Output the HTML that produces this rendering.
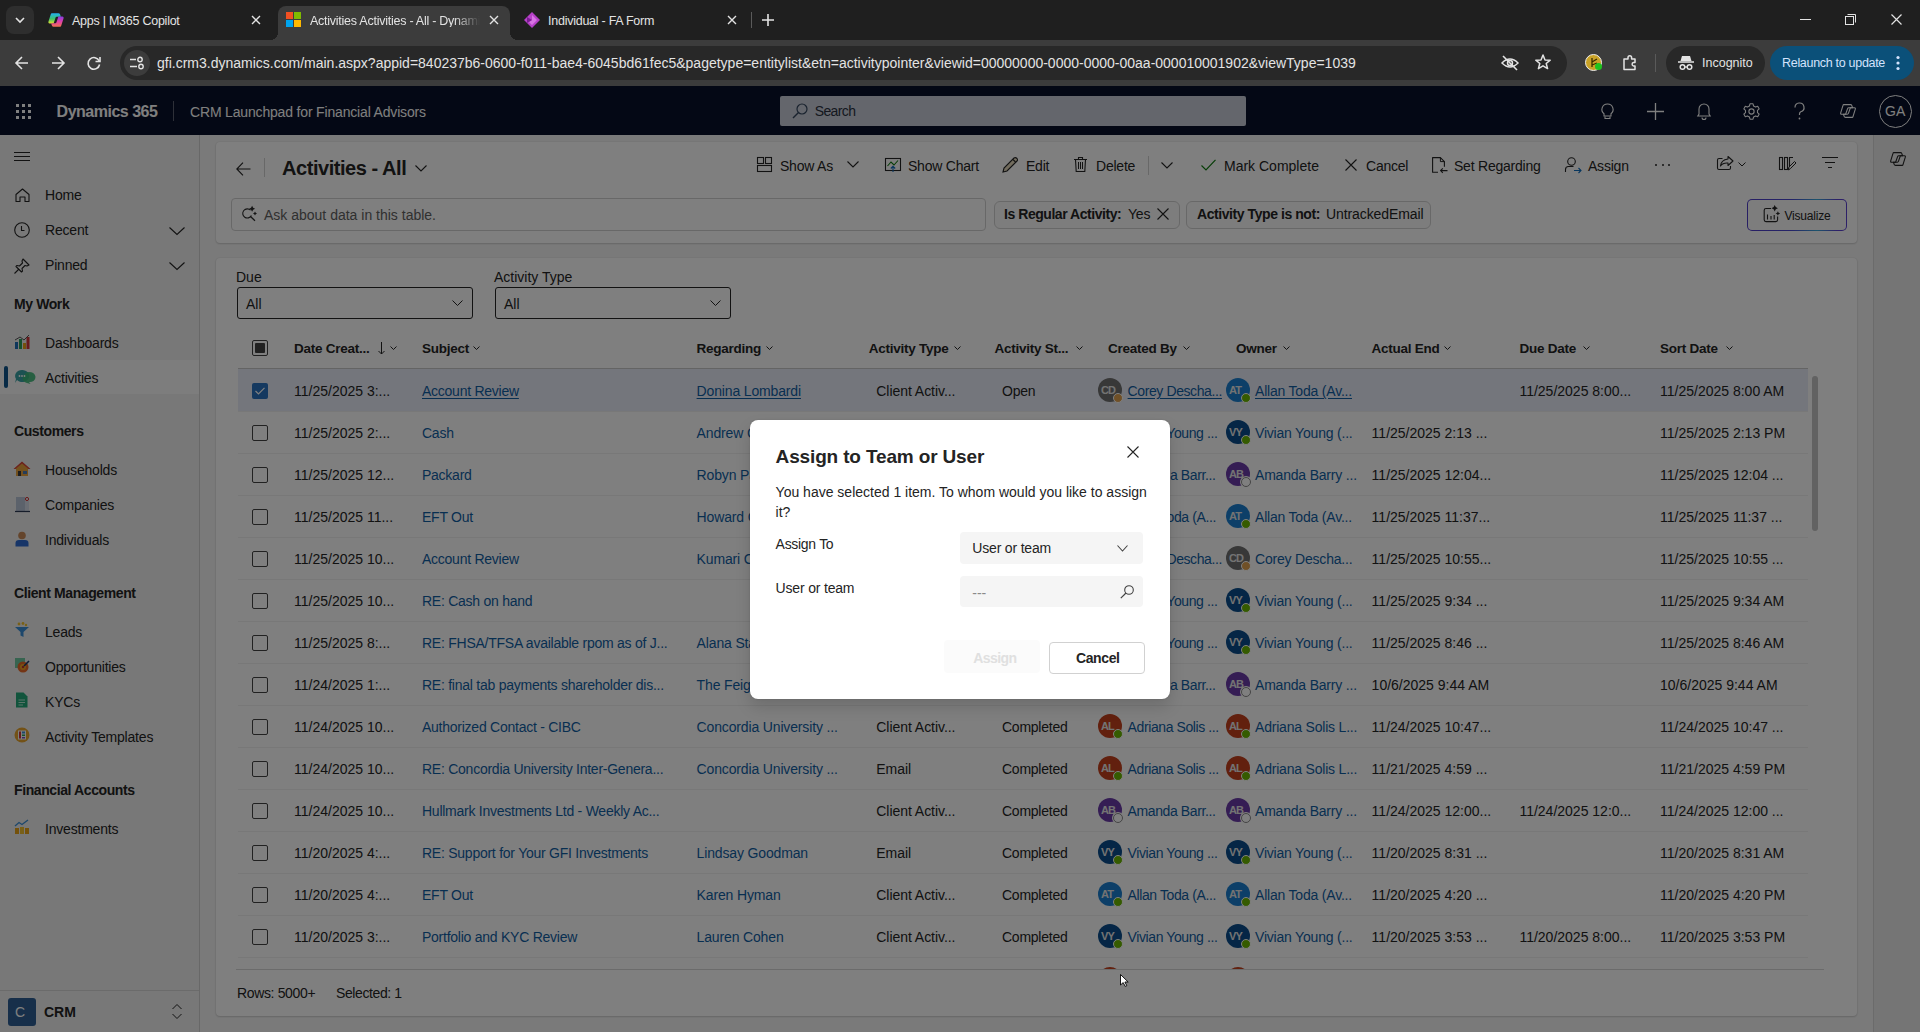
<!DOCTYPE html>
<html><head><meta charset="utf-8">
<style>
*{box-sizing:border-box}
html,body{margin:0;padding:0}
body{width:1920px;height:1032px;overflow:hidden;position:relative;font-family:"Liberation Sans",sans-serif;background:#f5f5f5;color:#242424}
.a{position:absolute}
.t{position:absolute;white-space:nowrap;line-height:1}
svg{position:absolute;overflow:visible}
.card{position:absolute;background:#fff;border-radius:4px;box-shadow:0 0 2px rgba(0,0,0,.12),0 1px 2px rgba(0,0,0,.14)}
.u{text-decoration:underline;text-underline-offset:2px}
</style></head><body>

<div class="a" style="left:0px;top:0px;width:1920px;height:40px;background:#1f1f1f;"></div>
<div class="a" style="left:0px;top:40px;width:1920px;height:46px;background:#3c3c3c;"></div>
<!-- tab strip -->
<div class="a" style="left:6px;top:6px;width:28px;height:28px;border-radius:8px;background:#2e2e2e"></div>
<svg style="left:14px;top:15px" width="12" height="10"><path d="M2 3 L6 7 L10 3" stroke="#e3e3e3" stroke-width="1.6" fill="none"/></svg>
<!-- tab1 -->
<svg style="left:48px;top:13px" width="16" height="14" viewBox="0 0 16 14"><defs><linearGradient id="cgl" x1="0" y1="0" x2="0" y2="1"><stop offset="0" stop-color="#22b0f0"/><stop offset=".55" stop-color="#3cc46a"/><stop offset="1" stop-color="#e0e030"/></linearGradient><linearGradient id="cgr" x1="0" y1="0" x2="0" y2="1"><stop offset="0" stop-color="#8a3ce0"/><stop offset=".5" stop-color="#e040a8"/><stop offset="1" stop-color="#f07050"/></linearGradient></defs><path d="M3.8 0.3 H10.6 Q11.6 0.3 12 1.3 L12.9 3.8 H8.6 Q7.9 3.8 7.6 4.6 L5.6 10.4 H1.6 Q0 10.4 0.4 8.8 L2.8 1.3 Q3.1 0.3 3.8 0.3 Z" fill="url(#cgl)"/><path d="M12.2 13.7 H5.4 Q4.4 13.7 4 12.7 L3.1 10.2 H7.4 Q8.1 10.2 8.4 9.4 L10.4 3.6 H14.4 Q16 3.6 15.6 5.2 L13.2 12.7 Q12.9 13.7 12.2 13.7 Z" fill="url(#cgr)"/></svg>
<div class="t" style="left:72px;top:14.8px;font-size:12.5px;letter-spacing:-0.25px;color:#e3e3e3">Apps | M365 Copilot</div>
<svg style="left:251px;top:15px" width="10" height="10"><path d="M1 1 L9 9 M9 1 L1 9" stroke="#e3e3e3" stroke-width="1.4"/></svg>
<!-- active tab -->
<div class="a" style="left:278px;top:6px;width:232px;height:34px;background:#3c3c3c;border-radius:8px 8px 0 0"></div>
<div class="a" style="left:270px;top:32px;width:8px;height:8px;background:radial-gradient(circle at 0 0,#1f1f1f 8px,#3c3c3c 8px)"></div>
<div class="a" style="left:510px;top:32px;width:8px;height:8px;background:radial-gradient(circle at 100% 0,#1f1f1f 8px,#3c3c3c 8px)"></div>
<div class="a" style="left:286px;top:12px;width:7px;height:7px;background:#f25022"></div>
<div class="a" style="left:294px;top:12px;width:7px;height:7px;background:#7fba00"></div>
<div class="a" style="left:286px;top:20px;width:7px;height:7px;background:#00a4ef"></div>
<div class="a" style="left:294px;top:20px;width:7px;height:7px;background:#ffb900"></div>
<div class="t" style="left:310px;top:14.8px;font-size:12.5px;letter-spacing:-0.25px;color:#e3e3e3;width:170px;overflow:hidden;-webkit-mask-image:linear-gradient(90deg,#000 85%,transparent)">Activities Activities - All - Dynamics 365</div>
<svg style="left:489px;top:15px" width="10" height="10"><path d="M1 1 L9 9 M9 1 L1 9" stroke="#e3e3e3" stroke-width="1.4"/></svg>
<!-- tab3 -->
<svg style="left:524px;top:12px" width="16" height="16"><path d="M8 0 L16 8 L8 16 L0 8 Z" fill="#b640c8"/><path d="M8 3 L13 8 L8 13 L5 10 L8 8 Z" fill="#e58af0" opacity=".7"/><path d="M3 5 L8 8 L3 11 Z" fill="#7a1d92"/></svg>
<div class="t" style="left:548px;top:14.8px;font-size:12.5px;letter-spacing:-0.25px;color:#e3e3e3">Individual - FA Form</div>
<svg style="left:727px;top:15px" width="10" height="10"><path d="M1 1 L9 9 M9 1 L1 9" stroke="#e3e3e3" stroke-width="1.4"/></svg>
<div class="a" style="left:751px;top:12px;width:1px;height:16px;background:#5a5a5a"></div>
<svg style="left:762px;top:14px" width="12" height="12"><path d="M6 0 V12 M0 6 H12" stroke="#e3e3e3" stroke-width="1.6"/></svg>
<!-- window controls -->
<div class="a" style="left:1800px;top:19px;width:11px;height:1px;background:#e3e3e3"></div>
<svg style="left:1845px;top:14px" width="11" height="11"><rect x="0.5" y="2.5" width="8" height="8" stroke="#e3e3e3" fill="none"/><path d="M2.5 0.5 H10.5 V8.5" stroke="#e3e3e3" fill="none"/></svg>
<svg style="left:1891px;top:14px" width="11" height="11"><path d="M0.5 0.5 L10.5 10.5 M10.5 0.5 L0.5 10.5" stroke="#e3e3e3" stroke-width="1.2"/></svg>
<!-- toolbar -->
<svg style="left:15px;top:56px" width="14" height="14"><path d="M13 7 H1 M7 1 L1 7 L7 13" stroke="#e3e3e3" stroke-width="1.6" fill="none"/></svg>
<svg style="left:51px;top:56px" width="14" height="14"><path d="M1 7 H13 M7 1 L13 7 L7 13" stroke="#e3e3e3" stroke-width="1.6" fill="none"/></svg>
<svg style="left:87px;top:56px" width="14" height="14"><path d="M12.2 5 A5.8 5.8 0 1 0 12.6 8.5" stroke="#e3e3e3" stroke-width="1.6" fill="none"/><path d="M13 1 V5.5 H8.5" stroke="#e3e3e3" stroke-width="1.6" fill="none"/></svg>
<div class="a" style="left:120px;top:46px;width:1447px;height:34px;border-radius:17px;background:#282828"></div>
<div class="a" style="left:124px;top:50px;width:26px;height:26px;border-radius:13px;background:#3c3c3c"></div>
<svg style="left:130px;top:56px" width="14" height="14"><path d="M0 3.5 H6 M0 10.5 H7" stroke="#e3e3e3" stroke-width="1.5"/><circle cx="10" cy="3.5" r="2.2" stroke="#e3e3e3" stroke-width="1.4" fill="none"/><circle cx="11" cy="10.5" r="2.2" stroke="#e3e3e3" stroke-width="1.4" fill="none"/></svg>
<div class="t" style="left:157px;top:56px;font-size:14px;color:#e3e3e3">gfi.crm3.dynamics.com/main.aspx?appid=840237b6-0600-f011-bae4-6045bd61fec5&amp;pagetype=entitylist&amp;etn=activitypointer&amp;viewid=00000000-0000-0000-00aa-000010001902&amp;viewType=1039</div>
<svg style="left:1501px;top:55px" width="18" height="16"><path d="M1 8 Q9 0 17 8 Q9 16 1 8 Z" stroke="#e3e3e3" stroke-width="1.5" fill="none"/><circle cx="9" cy="8" r="2.5" stroke="#e3e3e3" stroke-width="1.5" fill="none"/><path d="M2 1 L16 15" stroke="#e3e3e3" stroke-width="1.6"/></svg>
<svg style="left:1535px;top:54px" width="16" height="16"><path d="M8 1 L10 6 L15.2 6.2 L11.2 9.5 L12.6 14.6 L8 11.8 L3.4 14.6 L4.8 9.5 L0.8 6.2 L6 6 Z" stroke="#e3e3e3" stroke-width="1.5" fill="none" stroke-linejoin="round"/></svg>
<div class="a" style="left:1585px;top:54px;width:17px;height:17px;border-radius:50%;background:#c9a227;border:1px solid #eee"></div>
<svg style="left:1588px;top:57px" width="12" height="12"><path d="M4 1 V10 M4 5 L9 2 M4 8 L9 6" stroke="#3a2a00" stroke-width="1.3" fill="none"/></svg>
<div class="a" style="left:1595px;top:63px;width:7px;height:7px;border-radius:50%;background:#1ec31e"></div>
<svg style="left:1622px;top:55px" width="16" height="16"><path d="M2 4 H6 V2.5 A1.8 1.8 0 0 1 9.6 2.5 V4 H13 V7.5 H11.5 A1.8 1.8 0 0 0 11.5 11 H13 V14.5 H2 Z" stroke="#e3e3e3" stroke-width="1.5" fill="none" stroke-linejoin="round"/></svg>
<div class="a" style="left:1655px;top:54px;width:1px;height:18px;background:#5a5a5a"></div>
<div class="a" style="left:1666px;top:46px;width:99px;height:34px;border-radius:17px;background:#282828"></div>
<svg style="left:1678px;top:55px" width="16" height="16"><path d="M4 1 H12 L13.5 6 H2.5 Z" fill="#e3e3e3"/><path d="M0 7 H16" stroke="#e3e3e3" stroke-width="1.5"/><circle cx="4.5" cy="12" r="2.3" stroke="#e3e3e3" stroke-width="1.5" fill="none"/><circle cx="11.5" cy="12" r="2.3" stroke="#e3e3e3" stroke-width="1.5" fill="none"/><path d="M6.8 12 H9.2" stroke="#e3e3e3" stroke-width="1.3"/></svg>
<div class="t" style="left:1702px;top:56.5px;font-size:12.5px;color:#e3e3e3">Incognito</div>
<div class="a" style="left:1770px;top:46px;width:144px;height:34px;border-radius:17px;background:#0b5079"></div>
<div class="t" style="left:1782px;top:56.5px;font-size:12.5px;letter-spacing:-0.3px;color:#d3e3fd">Relaunch to update</div>
<svg style="left:1896px;top:55px" width="4" height="16"><circle cx="2" cy="2.5" r="1.6" fill="#d3e3fd"/><circle cx="2" cy="8" r="1.6" fill="#d3e3fd"/><circle cx="2" cy="13.5" r="1.6" fill="#d3e3fd"/></svg>

<div class="a" style="left:0px;top:86px;width:1920px;height:49px;background:#09112a;"></div>
<div class="a" style="left:16px;top:104px;width:3px;height:3px;background:#ffffff;"></div>
<div class="a" style="left:16px;top:110px;width:3px;height:3px;background:#ffffff;"></div>
<div class="a" style="left:16px;top:116px;width:3px;height:3px;background:#ffffff;"></div>
<div class="a" style="left:22px;top:104px;width:3px;height:3px;background:#ffffff;"></div>
<div class="a" style="left:22px;top:110px;width:3px;height:3px;background:#ffffff;"></div>
<div class="a" style="left:22px;top:116px;width:3px;height:3px;background:#ffffff;"></div>
<div class="a" style="left:28px;top:104px;width:3px;height:3px;background:#ffffff;"></div>
<div class="a" style="left:28px;top:110px;width:3px;height:3px;background:#ffffff;"></div>
<div class="a" style="left:28px;top:116px;width:3px;height:3px;background:#ffffff;"></div>
<div class="t " style="left:56.6px;top:104.46px;font-size:16px;color:#fff;font-weight:bold;letter-spacing:-0.5px">Dynamics 365</div>
<div class="a" style="left:173px;top:101px;width:1px;height:20px;background:#5c6070;"></div>
<div class="t " style="left:190px;top:105.15px;font-size:14px;color:#fff;font-weight:normal;letter-spacing:-0.17px">CRM Launchpad for Financial Advisors</div>
<div class="a" style="left:780px;top:96px;width:466px;height:30px;background:#c8ccd8;border-radius:2px"></div>
<svg style="left:792px;top:103px;" width="16" height="16" viewBox="0 0 16 16"><circle cx="10" cy="6" r="5" stroke="#34465e" stroke-width="1.2" fill="none"/><path d="M6.5 9.5 L1 15" stroke="#34465e" stroke-width="1.4"/></svg>
<div class="t " style="left:814.7px;top:104.15px;font-size:14px;color:#2a3140;font-weight:normal;letter-spacing:-0.6px">Search</div>
<svg style="left:1601px;top:103px;" width="13" height="17" viewBox="0 0 13 17"><path d="M6.5 1 A5.5 5.5 0 0 0 3 10.8 V13 H10 V10.8 A5.5 5.5 0 0 0 6.5 1 Z" stroke="#ffffff" stroke-width="1.1" fill="none"/><path d="M4 13.5 V15.5 H9 V13.5" stroke="#ffffff" stroke-width="1.1" fill="none"/></svg>
<svg style="left:1647px;top:103px;" width="17" height="17" viewBox="0 0 17 17"><path d="M8.5 0 V17 M0 8.5 H17" stroke="#ffffff" stroke-width="1.3"/></svg>
<svg style="left:1697px;top:103px;" width="14" height="17" viewBox="0 0 14 17"><path d="M7 1 A5 5 0 0 0 2 6 V11 L0.8 13 H13.2 L12 11 V6 A5 5 0 0 0 7 1 Z" stroke="#ffffff" stroke-width="1.1" fill="none"/><path d="M5 14.5 A2 2 0 0 0 9 14.5" stroke="#ffffff" stroke-width="1.1" fill="none"/></svg>
<svg style="left:1743px;top:103px;" width="17" height="17" viewBox="0 0 17 17"><circle cx="8.5" cy="8.5" r="2.6" stroke="#ffffff" stroke-width="1.1" fill="none"/><path d="M7 0.8 H10 L10.6 3 L12.6 4.1 L14.7 3.3 L16.2 5.9 L14.5 7.4 V9.6 L16.2 11.1 L14.7 13.7 L12.6 12.9 L10.6 14 L10 16.2 H7 L6.4 14 L4.4 12.9 L2.3 13.7 L0.8 11.1 L2.5 9.6 V7.4 L0.8 5.9 L2.3 3.3 L4.4 4.1 L6.4 3 Z" stroke="#ffffff" stroke-width="1.1" fill="none" stroke-linejoin="round"/></svg>
<svg style="left:1794px;top:103px;" width="11" height="17" viewBox="0 0 11 17"><path d="M1 4.5 A4.5 4.5 0 1 1 6.8 8.8 Q5.5 9.4 5.5 11 V12" stroke="#ffffff" stroke-width="1.2" fill="none"/><circle cx="5.5" cy="15.5" r="0.9" fill="#ffffff"/></svg>
<svg style="left:1840px;top:104px;" width="16" height="14" viewBox="0 0 16 14"><path d="M3.8 0.6 H10.6 Q11.4 0.6 11.7 1.4 L12.6 3.8 H8.6 Q7.9 3.8 7.6 4.6 L5.6 10.2 H1.6 Q0.3 10.2 0.7 8.8 L3 1.4 Q3.2 0.6 3.8 0.6 Z" stroke="#ffffff" stroke-width="1.1" fill="none" stroke-linejoin="round"/><path d="M12.2 13.4 H5.4 Q4.6 13.4 4.3 12.6 L3.4 10.2 H7.4 Q8.1 10.2 8.4 9.4 L10.4 3.8 H14.4 Q15.7 3.8 15.3 5.2 L13 12.6 Q12.8 13.4 12.2 13.4 Z" stroke="#ffffff" stroke-width="1.1" fill="none" stroke-linejoin="round"/></svg>
<div class="a" style="left:1879px;top:95px;width:33px;height:33px;border-radius:50%;border:1px solid #fff"></div>
<div class="t " style="left:1885px;top:104.15px;font-size:14px;color:#fff;font-weight:normal;">GA</div>
<div class="a" style="left:0px;top:135px;width:200px;height:897px;background:#f0f0f0;border-right:1px solid #d1d1d1"></div>
<div class="a" style="left:0px;top:990px;width:199px;height:1px;background:#d6d6d6;"></div>
<svg style="left:14px;top:152px;" width="16" height="10" viewBox="0 0 16 10"><path d="M0 0.5 H16 M0 4.5 H16 M0 8.5 H16" stroke="#242424" stroke-width="1"/></svg>
<svg style="left:15px;top:188px;" width="15" height="14" viewBox="0 0 15 14"><path d="M1 6.5 L7.5 1 L14 6.5 V13.5 H10 V9 H5 V13.5 H1 Z" stroke="#242424" stroke-width="1.1" fill="none" stroke-linejoin="round"/></svg>
<div class="t " style="left:45px;top:188.15px;font-size:14px;color:#242424;font-weight:normal;letter-spacing:-0.2px">Home</div>
<svg style="left:14px;top:222px;" width="16" height="16" viewBox="0 0 16 16"><circle cx="8" cy="8" r="7.3" stroke="#242424" stroke-width="1.1" fill="none"/><path d="M7.5 4 V8.5 H10.5" stroke="#242424" stroke-width="1.1" fill="none"/></svg>
<div class="t " style="left:45px;top:223.15px;font-size:14px;color:#242424;font-weight:normal;letter-spacing:-0.2px">Recent</div>
<svg style="left:169px;top:227px;" width="16" height="8" viewBox="0 0 16 8"><path d="M0.5 0.5 L8 7.5 L15.5 0.5" stroke="#242424" stroke-width="1.1" fill="none"/></svg>
<svg style="left:14px;top:258px;" width="16" height="16" viewBox="0 0 16 16"><path d="M9 1 L15 7 L13 8 L11 7.5 L8 10.5 L8.5 13 L7.5 14 L2 8.5 L3 7.5 L5.5 8 L8.5 5 L8 3 Z" stroke="#242424" stroke-width="1.1" fill="none" stroke-linejoin="round"/><path d="M5 11 L0.5 15.5" stroke="#242424" stroke-width="1.1"/></svg>
<div class="t " style="left:45px;top:258.15px;font-size:14px;color:#242424;font-weight:normal;letter-spacing:-0.2px">Pinned</div>
<svg style="left:169px;top:262px;" width="16" height="8" viewBox="0 0 16 8"><path d="M0.5 0.5 L8 7.5 L15.5 0.5" stroke="#242424" stroke-width="1.1" fill="none"/></svg>
<div class="t " style="left:14px;top:297.15px;font-size:14px;color:#242424;font-weight:bold;letter-spacing:-0.4px">My Work</div>
<svg style="left:14px;top:334px;" width="16" height="15" viewBox="0 0 16 15"><rect x="1" y="8" width="3" height="7" fill="#1f6fb8"/><rect x="5" y="5" width="3" height="10" fill="#2aa05a"/><rect x="9" y="9" width="3" height="6" fill="#e8a317"/><rect x="12.5" y="3" width="3" height="12" fill="#d13438"/><path d="M1 6 L6 3 L10 6 L15 1" stroke="#555" stroke-width="1" fill="none"/></svg>
<div class="t " style="left:45px;top:336.15px;font-size:14px;color:#242424;font-weight:normal;letter-spacing:-0.2px">Dashboards</div>
<div class="a" style="left:0px;top:360px;width:199px;height:34px;background:#fafafa;"></div>
<div class="a" style="left:4px;top:366px;width:3.5px;height:22px;background:#0f548c;border-radius:2px"></div>
<svg style="left:14px;top:369px;" width="17" height="15" viewBox="0 0 17 15"><path d="M8 1 A7 6 0 1 1 3 11 L1 14 L2 10 A7 6 0 0 1 8 1 Z" fill="#38a3a5"/><path d="M10 6 A6 5 0 1 1 15 13 L16.5 15 L13 14 A6 5 0 0 1 10 6 Z" fill="#3cb878" opacity=".9"/><circle cx="5.5" cy="7" r="0.9" fill="#fff"/><circle cx="8" cy="7" r="0.9" fill="#fff"/><circle cx="10.5" cy="7" r="0.9" fill="#fff"/></svg>
<div class="t " style="left:45px;top:371.15px;font-size:14px;color:#242424;font-weight:normal;letter-spacing:-0.2px">Activities</div>
<div class="t " style="left:14px;top:424.15px;font-size:14px;color:#242424;font-weight:bold;letter-spacing:-0.4px">Customers</div>
<svg style="left:14px;top:461px;" width="16" height="16" viewBox="0 0 16 16"><path d="M8 1 L16 8 H14 V15 H2 V8 H0 Z" fill="#e8a33c"/><path d="M8 0.5 L16.5 8 L14.5 8 L8 2.5 L1.5 8 L-0.5 8 Z" fill="#d9453b"/><rect x="4" y="10" width="3" height="5" fill="#3b3b3b"/><rect x="9" y="10" width="4" height="3" fill="#4a7ab5"/></svg>
<div class="t " style="left:45px;top:463.15px;font-size:14px;color:#242424;font-weight:normal;letter-spacing:-0.2px">Households</div>
<svg style="left:14px;top:496px;" width="16" height="16" viewBox="0 0 16 16"><rect x="2" y="1" width="9" height="14" fill="#b8c4d6"/><rect x="11" y="5" width="4" height="10" fill="#d6dde8"/><path d="M1 15.5 H16" stroke="#2d3b55" stroke-width="1.2"/><circle cx="13" cy="3" r="1.6" fill="none" stroke="#d13438" stroke-width="1"/></svg>
<div class="t " style="left:45px;top:498.15px;font-size:14px;color:#242424;font-weight:normal;letter-spacing:-0.2px">Companies</div>
<svg style="left:15px;top:531px;" width="14" height="16" viewBox="0 0 14 16"><circle cx="7" cy="4.5" r="3.8" fill="#c98a58"/><path d="M0.5 15.5 V12 Q0.5 9 4 9 H10 Q13.5 9 13.5 12 V15.5 Z" fill="#2f6bd0"/></svg>
<div class="t " style="left:45px;top:533.15px;font-size:14px;color:#242424;font-weight:normal;letter-spacing:-0.2px">Individuals</div>
<div class="t " style="left:14px;top:586.15px;font-size:14px;color:#242424;font-weight:bold;letter-spacing:-0.4px">Client Management</div>
<svg style="left:14px;top:622px;" width="16" height="16" viewBox="0 0 16 16"><path d="M1 5 H15 L9.5 10 V15 L6.5 13.5 V10 Z" fill="#3a8fd8"/><circle cx="5" cy="2" r="1.4" fill="#f2c12e"/><circle cx="9" cy="1.5" r="1.4" fill="#f2c12e"/><circle cx="12" cy="3" r="1.2" fill="#f2c12e"/></svg>
<div class="t " style="left:45px;top:625.15px;font-size:14px;color:#242424;font-weight:normal;letter-spacing:-0.2px">Leads</div>
<svg style="left:14px;top:657px;" width="16" height="16" viewBox="0 0 16 16"><rect x="1" y="1" width="10" height="10" fill="#4ebf8c" opacity=".8"/><circle cx="9" cy="10" r="5.5" fill="#e86b2a"/><circle cx="9" cy="10" r="3" fill="#f5a623"/><circle cx="9" cy="10" r="1.2" fill="#b33"/><path d="M10 9 L15 4" stroke="#1b3a6b" stroke-width="1.6"/></svg>
<div class="t " style="left:45px;top:660.15px;font-size:14px;color:#242424;font-weight:normal;letter-spacing:-0.2px">Opportunities</div>
<svg style="left:15px;top:692px;" width="13" height="16" viewBox="0 0 13 16"><path d="M1 0.5 H8.5 L12.5 4.5 V15.5 H1 Z" fill="#22a879"/><path d="M3.5 8 H10 M3.5 10.5 H10 M3.5 13 H8" stroke="#c7f0df" stroke-width="0.9"/></svg>
<div class="t " style="left:45px;top:695.15px;font-size:14px;color:#242424;font-weight:normal;letter-spacing:-0.2px">KYCs</div>
<svg style="left:14px;top:727px;" width="16" height="16" viewBox="0 0 16 16"><circle cx="8" cy="8" r="7.5" fill="#e7a52f"/><rect x="4" y="3.5" width="8" height="9" fill="#fff"/><rect x="5" y="4.5" width="2" height="7" fill="#d13438"/><rect x="8" y="4.5" width="3" height="2" fill="#3a8fd8"/><rect x="8" y="7.5" width="3" height="1.5" fill="#2aa05a"/><rect x="8" y="10" width="3" height="1.5" fill="#7a4fc0"/></svg>
<div class="t " style="left:45px;top:730.15px;font-size:14px;color:#242424;font-weight:normal;letter-spacing:-0.2px">Activity Templates</div>
<div class="t " style="left:14px;top:783.15px;font-size:14px;color:#242424;font-weight:bold;letter-spacing:-0.4px">Financial Accounts</div>
<svg style="left:14px;top:819px;" width="16" height="16" viewBox="0 0 16 16"><rect x="1" y="9" width="4" height="6" fill="#e8a317"/><rect x="6" y="8" width="4" height="7" fill="#f2c12e"/><rect x="11" y="9" width="4" height="6" fill="#e8a317"/><path d="M1 7 L5 3.5 L8 5.5 L14 1" stroke="#3a8fd8" stroke-width="1.3" fill="none"/></svg>
<div class="t " style="left:45px;top:822.15px;font-size:14px;color:#242424;font-weight:normal;letter-spacing:-0.2px">Investments</div>
<div class="a" style="left:8px;top:998px;width:28px;height:28px;background:#2f5f95;border-radius:3px"></div>
<div class="t " style="left:15px;top:1005.15px;font-size:14px;color:#ffffff;font-weight:normal;">C</div>
<div class="t " style="left:44px;top:1005.15px;font-size:14px;color:#242424;font-weight:bold;">CRM</div>
<svg style="left:172px;top:1004px;" width="10" height="15" viewBox="0 0 10 15"><path d="M0.5 5 L5 0.5 L9.5 5 M0.5 10 L5 14.5 L9.5 10" stroke="#242424" stroke-width="1" fill="none"/></svg>

<div class="a" style="left:200px;top:135px;width:1720px;height:897px;background:#f5f5f5;"></div>
<div class="a" style="left:1873px;top:135px;width:1px;height:897px;background:#d6d6d6;"></div>
<div class="a" style="left:1874px;top:135px;width:46px;height:897px;background:#ebebeb;"></div>
<svg style="left:1890px;top:152px;" width="16" height="14" viewBox="0 0 16 14"><path d="M3.8 0.6 H10.6 Q11.4 0.6 11.7 1.4 L12.6 3.8 H8.6 Q7.9 3.8 7.6 4.6 L5.6 10.2 H1.6 Q0.3 10.2 0.7 8.8 L3 1.4 Q3.2 0.6 3.8 0.6 Z" stroke="#242424" stroke-width="1.1" fill="none" stroke-linejoin="round"/><path d="M12.2 13.4 H5.4 Q4.6 13.4 4.3 12.6 L3.4 10.2 H7.4 Q8.1 10.2 8.4 9.4 L10.4 3.8 H14.4 Q15.7 3.8 15.3 5.2 L13 12.6 Q12.8 13.4 12.2 13.4 Z" stroke="#242424" stroke-width="1.1" fill="none" stroke-linejoin="round"/></svg>
<div class="card" style="left:216px;top:142px;width:1641px;height:101px"></div>
<svg style="left:236px;top:162px;" width="15" height="14" viewBox="0 0 15 14"><path d="M14.5 7 H1 M7 0.6 L0.8 7 L7 13.4" stroke="#242424" stroke-width="1.1" fill="none"/></svg>
<div class="a" style="left:264px;top:158px;width:1px;height:19px;background:#d1d1d1;"></div>
<div class="t " style="left:282px;top:158.07px;font-size:20px;color:#242424;font-weight:bold;letter-spacing:-0.45px">Activities - All</div>
<svg style="left:415px;top:165px;" width="12" height="7" viewBox="0 0 12 7"><path d="M0.5 0.5 L6 6 L11.5 0.5" stroke="#242424" stroke-width="1.1" fill="none"/></svg>
<svg style="left:757px;top:157px;" width="15" height="15" viewBox="0 0 15 15"><rect x="0.5" y="0.5" width="6" height="6" stroke="#242424" stroke-width="1.1" fill="none"/><rect x="8.5" y="0.5" width="6" height="6" stroke="#242424" stroke-width="1.1" fill="none"/><rect x="0.5" y="8.5" width="14" height="6" stroke="#242424" stroke-width="1.1" fill="none"/></svg>
<div class="t " style="left:780px;top:158.95px;font-size:14px;color:#242424;font-weight:normal;letter-spacing:-0.22px">Show As</div>
<svg style="left:847px;top:161px;" width="12" height="7" viewBox="0 0 12 7"><path d="M0.5 0.5 L6 6 L11.5 0.5" stroke="#242424" stroke-width="1.1" fill="none"/></svg>
<svg style="left:885px;top:158px;" width="16" height="14" viewBox="0 0 16 14"><rect x="0.5" y="0.5" width="15" height="12" stroke="#242424" stroke-width="1.1" fill="none"/><path d="M2.5 8 L6 4 L9 7 L13 2.5" stroke="#107c10" stroke-width="1.1" fill="none"/><path d="M8 14 V8.5 M5.8 10.5 L8 8.3 L10.2 10.5" stroke="#0f6cbd" stroke-width="1.1" fill="none"/></svg>
<div class="t " style="left:908px;top:158.95px;font-size:14px;color:#242424;font-weight:normal;letter-spacing:-0.22px">Show Chart</div>
<svg style="left:1002px;top:157px;" width="16" height="16" viewBox="0 0 16 16"><path d="M1 15 L2 11 L12 1 Q13.5 0 15 1.5 Q16 3 15 4 L5 14 Z" stroke="#242424" stroke-width="1.1" fill="#c9b37a" fill-opacity=".5"/><path d="M11 2.5 L13.5 5" stroke="#242424" stroke-width="1.1"/></svg>
<div class="t " style="left:1026px;top:158.95px;font-size:14px;color:#242424;font-weight:normal;letter-spacing:-0.22px">Edit</div>
<svg style="left:1074px;top:157px;" width="13" height="15" viewBox="0 0 13 15"><path d="M0 2.5 H13 M4.5 2.5 V0.5 H8.5 V2.5 M1.5 2.5 L2.2 14.5 H10.8 L11.5 2.5" stroke="#242424" stroke-width="1.1" fill="none"/><path d="M4.5 5 V12 M6.5 5 V12 M8.5 5 V12" stroke="#242424" stroke-width="1"/></svg>
<div class="t " style="left:1096px;top:158.95px;font-size:14px;color:#242424;font-weight:normal;letter-spacing:-0.22px">Delete</div>
<div class="a" style="left:1148px;top:156px;width:1px;height:19px;background:#d1d1d1;"></div>
<svg style="left:1161px;top:162px;" width="12" height="7" viewBox="0 0 12 7"><path d="M0.5 0.5 L6 6 L11.5 0.5" stroke="#242424" stroke-width="1.1" fill="none"/></svg>
<svg style="left:1201px;top:159px;" width="15" height="12" viewBox="0 0 15 12"><path d="M0.5 6.5 L5 11 L14.5 0.8" stroke="#107c10" stroke-width="1.2" fill="none"/></svg>
<div class="t " style="left:1224px;top:158.95px;font-size:14px;color:#242424;font-weight:normal;">Mark Complete</div>
<svg style="left:1345px;top:159px;" width="12" height="12" viewBox="0 0 12 12"><path d="M0.5 0.5 L11.5 11.5 M11.5 0.5 L0.5 11.5" stroke="#242424" stroke-width="1.1"/></svg>
<div class="t " style="left:1366px;top:158.95px;font-size:14px;color:#242424;font-weight:normal;letter-spacing:-0.22px">Cancel</div>
<svg style="left:1432px;top:157px;" width="16" height="16" viewBox="0 0 16 16"><path d="M6 15.2 H0.6 V0.6 H8.4 L12.4 4.6 V9.8" stroke="#242424" stroke-width="1.1" fill="none" stroke-linejoin="round"/><path d="M8.4 0.6 V4.6 H12.4" stroke="#242424" stroke-width="1" fill="none"/><path d="M15.5 13.6 H8.6 M10.8 11.4 L8.6 13.6 L10.8 15.8" stroke="#242424" stroke-width="1.1" fill="none"/></svg>
<div class="t " style="left:1454px;top:158.95px;font-size:14px;color:#242424;font-weight:normal;letter-spacing:-0.22px">Set Regarding</div>
<svg style="left:1565px;top:157px;" width="17" height="16" viewBox="0 0 17 16"><circle cx="6.5" cy="4.5" r="3.8" stroke="#242424" stroke-width="1.1" fill="none"/><path d="M0.5 15 V12.5 Q0.5 9.5 3.5 9.5 H8.5" stroke="#242424" stroke-width="1.1" fill="none"/><path d="M9 13.5 H16 M13.5 11 L16 13.5 L13.5 16" stroke="#0f6cbd" stroke-width="1.1" fill="none"/></svg>
<div class="t " style="left:1588px;top:158.95px;font-size:14px;color:#242424;font-weight:normal;letter-spacing:-0.22px">Assign</div>
<div class="a" style="left:1655.0px;top:164px;width:2px;height:2px;background:#242424;border-radius:1px"></div>
<div class="a" style="left:1661.5px;top:164px;width:2px;height:2px;background:#242424;border-radius:1px"></div>
<div class="a" style="left:1668.0px;top:164px;width:2px;height:2px;background:#242424;border-radius:1px"></div>
<svg style="left:1717px;top:156px;" width="17" height="14" viewBox="0 0 17 14"><path d="M11 0.5 L16 5 L11 9.5 V7 Q6 6.5 3.5 10 Q4 4 11 3 Z" stroke="#242424" stroke-width="1.1" fill="none" stroke-linejoin="round"/><path d="M5.5 2.5 H2 Q0.5 2.5 0.5 4 V12 Q0.5 13.5 2 13.5 H12 Q13.5 13.5 13.5 12 V10" stroke="#242424" stroke-width="1.1" fill="none"/></svg>
<svg style="left:1738px;top:162px;" width="8" height="5" viewBox="0 0 8 5"><path d="M0.5 0.5 L4 4 L7.5 0.5" stroke="#242424" stroke-width="1" fill="none"/></svg>
<svg style="left:1779px;top:157px;" width="17" height="13" viewBox="0 0 17 13"><rect x="0.5" y="0.5" width="3" height="12" stroke="#242424" stroke-width="1.1" fill="none"/><rect x="5.5" y="0.5" width="3" height="12" stroke="#242424" stroke-width="1.1" fill="none"/><path d="M10.5 12.5 V0.5 H14" stroke="#242424" stroke-width="1.1" fill="none"/><path d="M9 13 L10 10 L15.5 4.5 L17 6 L11.5 11.5 Z" stroke="#242424" stroke-width="1" fill="#fff"/></svg>
<svg style="left:1822px;top:157px;" width="16" height="12" viewBox="0 0 16 12"><path d="M0 0.5 H16 M3 5.5 H13 M6 10.5 H10" stroke="#242424" stroke-width="1.2"/></svg>
<div class="a" style="left:231px;top:198px;width:755px;height:33px;border:1px solid #d1d1d1;border-radius:4px;background:#fff"></div>
<svg style="left:242px;top:203px;" width="16" height="19" viewBox="0 0 16 19"><path d="M8.6 7.2 A4.6 4.6 0 1 0 9.4 12.6" stroke="#2a2a2a" stroke-width="1.1" fill="none"/><path d="M8.5 13.5 L13 17.8" stroke="#2a2a2a" stroke-width="1.2"/><path d="M10.1 2.8 Q10.7 5.199999999999999 13.1 5.8 Q10.7 6.4 10.1 8.8 Q9.5 6.4 7.1 5.8 Q9.5 5.199999999999999 10.1 2.8 Z M13 8.4 Q13.4 10.0 15 10.4 Q13.4 10.8 13 12.4 Q12.6 10.8 11 10.4 Q12.6 10.0 13 8.4 Z" fill="#2a2a2a"/></svg>
<div class="t " style="left:264px;top:208.15px;font-size:14px;color:#616161;font-weight:normal;">Ask about data in this table.</div>
<div class="a" style="left:994px;top:201px;width:186px;height:28px;border:1px solid #d1d1d1;border-radius:6px;background:#fafafa"></div>
<div class="t " style="left:1004px;top:207.15px;font-size:14px;color:#242424;font-weight:bold;letter-spacing:-0.45px">Is Regular Activity:</div>
<div class="t " style="left:1128px;top:207.15px;font-size:14px;color:#242424;font-weight:normal;letter-spacing:-0.2px">Yes</div>
<svg style="left:1157px;top:208px;" width="12" height="12" viewBox="0 0 12 12"><path d="M0.5 0.5 L11.5 11.5 M11.5 0.5 L0.5 11.5" stroke="#242424" stroke-width="1.1"/></svg>
<div class="a" style="left:1186px;top:201px;width:245px;height:28px;border:1px solid #d1d1d1;border-radius:6px;background:#fafafa"></div>
<div class="t " style="left:1197px;top:207.15px;font-size:14px;color:#242424;font-weight:bold;letter-spacing:-0.43px">Activity Type is not:</div>
<div class="t " style="left:1326px;top:207.15px;font-size:14px;color:#242424;font-weight:normal;letter-spacing:-0.1px">UntrackedEmail</div>
<div class="a" style="left:1747px;top:199px;width:100px;height:32px;border-radius:5px;padding:1px;background:linear-gradient(90deg,#4f3cc8,#4a48d0 45%,#3aa8d8 70%,#5a40d0 90%,#5a40d0)"><div style="width:100%;height:100%;background:#fafafa;border-radius:4px"></div></div>
<svg style="left:1763px;top:207px;" width="17" height="16" viewBox="0 0 17 16"><path d="M8 1.5 H3 Q1.2 1.5 1.2 3.3 V12.8 Q1.2 14.6 3 14.6 H12.8 Q14.6 14.6 14.6 12.8 V9.5" stroke="#242424" stroke-width="1.1" fill="none"/><path d="M4.5 12.4 V7.5 M8 12.4 V9 M11.2 12.4 V8" stroke="#242424" stroke-width="1.1"/><path d="M11.7 -2.0 Q12.276 0.624 14.899999999999999 1.2 Q12.276 1.7759999999999998 11.7 4.4 Q11.123999999999999 1.7759999999999998 8.5 1.2 Q11.123999999999999 0.624 11.7 -2.0 Z M14.9 4.2 Q15.296000000000001 6.0040000000000004 17.1 6.4 Q15.296000000000001 6.796 14.9 8.600000000000001 Q14.504 6.796 12.7 6.4 Q14.504 6.0040000000000004 14.9 4.2 Z" fill="#242424"/></svg>
<div class="t " style="left:1784.5px;top:209.84px;font-size:12px;color:#242424;font-weight:normal;letter-spacing:-0.2px">Visualize</div>
<div class="card" style="left:216px;top:258px;width:1641px;height:758px"></div>
<div class="t " style="left:236px;top:270.15px;font-size:14px;color:#242424;font-weight:normal;">Due</div>
<div class="a" style="left:237px;top:287px;width:236px;height:32px;border:1px solid #242424;border-radius:3px;background:#fff"></div>
<div class="t " style="left:246px;top:297.15px;font-size:14px;color:#242424;font-weight:normal;">All</div>
<svg style="left:452px;top:300px;" width="11" height="6" viewBox="0 0 11 6"><path d="M0.5 0.5 L5.5 5.5 L10.5 0.5" stroke="#242424" stroke-width="1" fill="none"/></svg>
<div class="t " style="left:494px;top:270.15px;font-size:14px;color:#242424;font-weight:normal;">Activity Type</div>
<div class="a" style="left:495px;top:287px;width:236px;height:32px;border:1px solid #242424;border-radius:3px;background:#fff"></div>
<div class="t " style="left:504px;top:297.15px;font-size:14px;color:#242424;font-weight:normal;">All</div>
<svg style="left:710px;top:300px;" width="11" height="6" viewBox="0 0 11 6"><path d="M0.5 0.5 L5.5 5.5 L10.5 0.5" stroke="#242424" stroke-width="1" fill="none"/></svg>
<div class="a" style="left:252px;top:340px;width:16px;height:16px;border:1px solid #424242;border-radius:2px"></div>
<div class="a" style="left:255px;top:343px;width:10px;height:10px;background:#424242;border-radius:1px"></div>
<div class="t " style="left:294px;top:341.87px;font-size:13.5px;color:#242424;font-weight:bold;letter-spacing:-0.25px">Date Creat...</div>
<svg style="left:378px;top:342px;" width="7" height="13" viewBox="0 0 7 13"><path d="M3.5 0 V12 M0.5 9 L3.5 12 L6.5 9" stroke="#242424" stroke-width="1" fill="none"/></svg>
<svg style="left:390px;top:346px;" width="7" height="4" viewBox="0 0 7 4"><path d="M0.5 0.5 L3.5 3.5 L6.5 0.5" stroke="#242424" stroke-width="1" fill="none"/></svg>
<div class="t " style="left:422px;top:341.87px;font-size:13.5px;color:#242424;font-weight:bold;letter-spacing:-0.25px">Subject</div>
<svg style="left:473px;top:346px;" width="7" height="4" viewBox="0 0 7 4"><path d="M0.5 0.5 L3.5 3.5 L6.5 0.5" stroke="#242424" stroke-width="1" fill="none"/></svg>
<div class="t " style="left:696.6px;top:341.87px;font-size:13.5px;color:#242424;font-weight:bold;letter-spacing:-0.25px">Regarding</div>
<svg style="left:765.5px;top:346px;" width="7" height="4" viewBox="0 0 7 4"><path d="M0.5 0.5 L3.5 3.5 L6.5 0.5" stroke="#242424" stroke-width="1" fill="none"/></svg>
<div class="t " style="left:868.7px;top:341.87px;font-size:13.5px;color:#242424;font-weight:bold;letter-spacing:-0.25px">Activity Type</div>
<svg style="left:954px;top:346px;" width="7" height="4" viewBox="0 0 7 4"><path d="M0.5 0.5 L3.5 3.5 L6.5 0.5" stroke="#242424" stroke-width="1" fill="none"/></svg>
<div class="t " style="left:994.4px;top:341.87px;font-size:13.5px;color:#242424;font-weight:bold;letter-spacing:-0.25px">Activity St...</div>
<svg style="left:1076px;top:346px;" width="7" height="4" viewBox="0 0 7 4"><path d="M0.5 0.5 L3.5 3.5 L6.5 0.5" stroke="#242424" stroke-width="1" fill="none"/></svg>
<div class="t " style="left:1108px;top:341.87px;font-size:13.5px;color:#242424;font-weight:bold;letter-spacing:-0.25px">Created By</div>
<svg style="left:1183px;top:346px;" width="7" height="4" viewBox="0 0 7 4"><path d="M0.5 0.5 L3.5 3.5 L6.5 0.5" stroke="#242424" stroke-width="1" fill="none"/></svg>
<div class="t " style="left:1236px;top:341.87px;font-size:13.5px;color:#242424;font-weight:bold;letter-spacing:-0.25px">Owner</div>
<svg style="left:1283px;top:346px;" width="7" height="4" viewBox="0 0 7 4"><path d="M0.5 0.5 L3.5 3.5 L6.5 0.5" stroke="#242424" stroke-width="1" fill="none"/></svg>
<div class="t " style="left:1371.6px;top:341.87px;font-size:13.5px;color:#242424;font-weight:bold;letter-spacing:-0.25px">Actual End</div>
<svg style="left:1444px;top:346px;" width="7" height="4" viewBox="0 0 7 4"><path d="M0.5 0.5 L3.5 3.5 L6.5 0.5" stroke="#242424" stroke-width="1" fill="none"/></svg>
<div class="t " style="left:1519.4px;top:341.87px;font-size:13.5px;color:#242424;font-weight:bold;letter-spacing:-0.25px">Due Date</div>
<svg style="left:1583px;top:346px;" width="7" height="4" viewBox="0 0 7 4"><path d="M0.5 0.5 L3.5 3.5 L6.5 0.5" stroke="#242424" stroke-width="1" fill="none"/></svg>
<div class="t " style="left:1660px;top:341.87px;font-size:13.5px;color:#242424;font-weight:bold;letter-spacing:-0.25px">Sort Date</div>
<svg style="left:1726px;top:346px;" width="7" height="4" viewBox="0 0 7 4"><path d="M0.5 0.5 L3.5 3.5 L6.5 0.5" stroke="#242424" stroke-width="1" fill="none"/></svg>
<div class="a" style="left:238px;top:368px;width:1570px;height:1px;background:#c8c8c8;"></div>
<div class="a" style="left:238px;top:369px;width:1570px;height:42px;background:#e9edf9;"></div>
<div class="a" style="left:252px;top:383px;width:16px;height:16px;background:#2a72c0;border-radius:2px"></div>
<svg style="left:255px;top:387px;" width="10" height="8" viewBox="0 0 10 8"><path d="M0.5 4 L3.5 7 L9.5 0.8" stroke="#fff" stroke-width="1.2" fill="none"/></svg>
<div class="t " style="left:294px;top:384.15px;font-size:14px;color:#242424;font-weight:normal;">11/25/2025 3:...</div>
<div class="t u" style="left:422px;top:384.15px;font-size:14px;color:#115ea3;font-weight:normal;letter-spacing:-0.25px">Account Review</div>
<div class="t u" style="left:696.6px;top:384.15px;font-size:14px;color:#115ea3;font-weight:normal;letter-spacing:-0.15px">Donina Lombardi</div>
<div class="t " style="left:876.3px;top:384.15px;font-size:14px;color:#242424;font-weight:normal;letter-spacing:-0.05px">Client Activ...</div>
<div class="t " style="left:1002px;top:384.15px;font-size:14px;color:#242424;font-weight:normal;letter-spacing:-0.25px">Open</div>
<div class="a" style="left:1098px;top:378px;width:24px;height:24px;border-radius:50%;background:#707070"></div>
<div class="t " style="left:1101px;top:384.69px;font-size:11px;color:#e6e6e6;font-weight:bold;letter-spacing:-0.9px">CD</div>
<div class="a" style="left:1113px;top:393px;width:10px;height:10px;border-radius:50%;background:#e0a04f;border:1px solid #fff"></div>
<div class="t u" style="left:1127.6px;top:384.15px;font-size:14px;color:#115ea3;font-weight:normal;letter-spacing:-0.4px">Corey Descha...</div>
<div class="a" style="left:1226px;top:378px;width:24px;height:24px;border-radius:50%;background:#1a7fd0"></div>
<div class="t " style="left:1229px;top:384.69px;font-size:11px;color:#e6e6e6;font-weight:bold;letter-spacing:-0.9px">AT</div>
<div class="a" style="left:1241px;top:393px;width:10px;height:10px;border-radius:50%;background:#6bb700;border:1px solid #fff"></div>
<div class="t u" style="left:1255px;top:384.15px;font-size:14px;color:#115ea3;font-weight:normal;letter-spacing:-0.2px">Allan Toda (Av...</div>
<div class="t " style="left:1519.4px;top:384.15px;font-size:14px;color:#242424;font-weight:normal;">11/25/2025 8:00...</div>
<div class="t " style="left:1660px;top:384.15px;font-size:14px;color:#242424;font-weight:normal;">11/25/2025 8:00 AM</div>
<div class="a" style="left:238px;top:411px;width:1570px;height:1px;background:#f0f0f0;"></div>
<div class="a" style="left:252px;top:425px;width:16px;height:16px;border:1px solid #424242;border-radius:2px"></div>
<div class="t " style="left:294px;top:426.15px;font-size:14px;color:#242424;font-weight:normal;">11/25/2025 2:...</div>
<div class="t " style="left:422px;top:426.15px;font-size:14px;color:#115ea3;font-weight:normal;letter-spacing:-0.25px">Cash</div>
<div class="t " style="left:696.6px;top:426.15px;font-size:14px;color:#115ea3;font-weight:normal;letter-spacing:-0.15px">Andrew Chen</div>
<div class="t " style="left:876.3px;top:426.15px;font-size:14px;color:#242424;font-weight:normal;letter-spacing:-0.05px">Client Activ...</div>
<div class="t " style="left:1002px;top:426.15px;font-size:14px;color:#242424;font-weight:normal;letter-spacing:-0.25px">Completed</div>
<div class="a" style="left:1098px;top:420px;width:24px;height:24px;border-radius:50%;background:#0a4d8c"></div>
<div class="t " style="left:1101px;top:426.69px;font-size:11px;color:#e6e6e6;font-weight:bold;letter-spacing:-0.9px">VY</div>
<div class="a" style="left:1113px;top:435px;width:10px;height:10px;border-radius:50%;background:#6bb700;border:1px solid #fff"></div>
<div class="t " style="left:1127.6px;top:426.15px;font-size:14px;color:#115ea3;font-weight:normal;letter-spacing:-0.4px">Vivian Young ...</div>
<div class="a" style="left:1226px;top:420px;width:24px;height:24px;border-radius:50%;background:#0a4d8c"></div>
<div class="t " style="left:1229px;top:426.69px;font-size:11px;color:#e6e6e6;font-weight:bold;letter-spacing:-0.9px">VY</div>
<div class="a" style="left:1241px;top:435px;width:10px;height:10px;border-radius:50%;background:#6bb700;border:1px solid #fff"></div>
<div class="t " style="left:1255px;top:426.15px;font-size:14px;color:#115ea3;font-weight:normal;letter-spacing:-0.2px">Vivian Young (...</div>
<div class="t " style="left:1371.6px;top:426.15px;font-size:14px;color:#242424;font-weight:normal;">11/25/2025 2:13 ...</div>
<div class="t " style="left:1660px;top:426.15px;font-size:14px;color:#242424;font-weight:normal;">11/25/2025 2:13 PM</div>
<div class="a" style="left:238px;top:453px;width:1570px;height:1px;background:#f0f0f0;"></div>
<div class="a" style="left:252px;top:467px;width:16px;height:16px;border:1px solid #424242;border-radius:2px"></div>
<div class="t " style="left:294px;top:468.15px;font-size:14px;color:#242424;font-weight:normal;">11/25/2025 12...</div>
<div class="t " style="left:422px;top:468.15px;font-size:14px;color:#115ea3;font-weight:normal;letter-spacing:-0.25px">Packard</div>
<div class="t " style="left:696.6px;top:468.15px;font-size:14px;color:#115ea3;font-weight:normal;letter-spacing:-0.15px">Robyn Packard</div>
<div class="t " style="left:876.3px;top:468.15px;font-size:14px;color:#242424;font-weight:normal;letter-spacing:-0.05px">Client Activ...</div>
<div class="t " style="left:1002px;top:468.15px;font-size:14px;color:#242424;font-weight:normal;letter-spacing:-0.25px">Completed</div>
<div class="a" style="left:1098px;top:462px;width:24px;height:24px;border-radius:50%;background:#6a3aa8"></div>
<div class="t " style="left:1101px;top:468.69px;font-size:11px;color:#e6e6e6;font-weight:bold;letter-spacing:-0.9px">AB</div>
<div class="a" style="left:1113px;top:477px;width:10px;height:10px;border-radius:50%;background:#fff;border:1.5px solid #8a8a8a;box-shadow:0 0 0 1px #fff"></div>
<div class="t " style="left:1127.6px;top:468.15px;font-size:14px;color:#115ea3;font-weight:normal;letter-spacing:-0.4px">Amanda Barr...</div>
<div class="a" style="left:1226px;top:462px;width:24px;height:24px;border-radius:50%;background:#6a3aa8"></div>
<div class="t " style="left:1229px;top:468.69px;font-size:11px;color:#e6e6e6;font-weight:bold;letter-spacing:-0.9px">AB</div>
<div class="a" style="left:1241px;top:477px;width:10px;height:10px;border-radius:50%;background:#fff;border:1.5px solid #8a8a8a;box-shadow:0 0 0 1px #fff"></div>
<div class="t " style="left:1255px;top:468.15px;font-size:14px;color:#115ea3;font-weight:normal;letter-spacing:-0.2px">Amanda Barry ...</div>
<div class="t " style="left:1371.6px;top:468.15px;font-size:14px;color:#242424;font-weight:normal;">11/25/2025 12:04...</div>
<div class="t " style="left:1660px;top:468.15px;font-size:14px;color:#242424;font-weight:normal;">11/25/2025 12:04 ...</div>
<div class="a" style="left:238px;top:495px;width:1570px;height:1px;background:#f0f0f0;"></div>
<div class="a" style="left:252px;top:509px;width:16px;height:16px;border:1px solid #424242;border-radius:2px"></div>
<div class="t " style="left:294px;top:510.15px;font-size:14px;color:#242424;font-weight:normal;">11/25/2025 11...</div>
<div class="t " style="left:422px;top:510.15px;font-size:14px;color:#115ea3;font-weight:normal;letter-spacing:-0.25px">EFT Out</div>
<div class="t " style="left:696.6px;top:510.15px;font-size:14px;color:#115ea3;font-weight:normal;letter-spacing:-0.15px">Howard Green</div>
<div class="t " style="left:876.3px;top:510.15px;font-size:14px;color:#242424;font-weight:normal;letter-spacing:-0.05px">Client Activ...</div>
<div class="t " style="left:1002px;top:510.15px;font-size:14px;color:#242424;font-weight:normal;letter-spacing:-0.25px">Completed</div>
<div class="a" style="left:1098px;top:504px;width:24px;height:24px;border-radius:50%;background:#1a7fd0"></div>
<div class="t " style="left:1101px;top:510.69px;font-size:11px;color:#e6e6e6;font-weight:bold;letter-spacing:-0.9px">AT</div>
<div class="a" style="left:1113px;top:519px;width:10px;height:10px;border-radius:50%;background:#6bb700;border:1px solid #fff"></div>
<div class="t " style="left:1127.6px;top:510.15px;font-size:14px;color:#115ea3;font-weight:normal;letter-spacing:-0.4px">Allan Toda (A...</div>
<div class="a" style="left:1226px;top:504px;width:24px;height:24px;border-radius:50%;background:#1a7fd0"></div>
<div class="t " style="left:1229px;top:510.69px;font-size:11px;color:#e6e6e6;font-weight:bold;letter-spacing:-0.9px">AT</div>
<div class="a" style="left:1241px;top:519px;width:10px;height:10px;border-radius:50%;background:#6bb700;border:1px solid #fff"></div>
<div class="t " style="left:1255px;top:510.15px;font-size:14px;color:#115ea3;font-weight:normal;letter-spacing:-0.2px">Allan Toda (Av...</div>
<div class="t " style="left:1371.6px;top:510.15px;font-size:14px;color:#242424;font-weight:normal;">11/25/2025 11:37...</div>
<div class="t " style="left:1660px;top:510.15px;font-size:14px;color:#242424;font-weight:normal;">11/25/2025 11:37 ...</div>
<div class="a" style="left:238px;top:537px;width:1570px;height:1px;background:#f0f0f0;"></div>
<div class="a" style="left:252px;top:551px;width:16px;height:16px;border:1px solid #424242;border-radius:2px"></div>
<div class="t " style="left:294px;top:552.15px;font-size:14px;color:#242424;font-weight:normal;">11/25/2025 10...</div>
<div class="t " style="left:422px;top:552.15px;font-size:14px;color:#115ea3;font-weight:normal;letter-spacing:-0.25px">Account Review</div>
<div class="t " style="left:696.6px;top:552.15px;font-size:14px;color:#115ea3;font-weight:normal;letter-spacing:-0.15px">Kumari Chand</div>
<div class="t " style="left:876.3px;top:552.15px;font-size:14px;color:#242424;font-weight:normal;letter-spacing:-0.05px">Client Activ...</div>
<div class="t " style="left:1002px;top:552.15px;font-size:14px;color:#242424;font-weight:normal;letter-spacing:-0.25px">Completed</div>
<div class="a" style="left:1098px;top:546px;width:24px;height:24px;border-radius:50%;background:#707070"></div>
<div class="t " style="left:1101px;top:552.69px;font-size:11px;color:#e6e6e6;font-weight:bold;letter-spacing:-0.9px">CD</div>
<div class="a" style="left:1113px;top:561px;width:10px;height:10px;border-radius:50%;background:#e0a04f;border:1px solid #fff"></div>
<div class="t " style="left:1127.6px;top:552.15px;font-size:14px;color:#115ea3;font-weight:normal;letter-spacing:-0.4px">Corey Descha...</div>
<div class="a" style="left:1226px;top:546px;width:24px;height:24px;border-radius:50%;background:#707070"></div>
<div class="t " style="left:1229px;top:552.69px;font-size:11px;color:#e6e6e6;font-weight:bold;letter-spacing:-0.9px">CD</div>
<div class="a" style="left:1241px;top:561px;width:10px;height:10px;border-radius:50%;background:#e0a04f;border:1px solid #fff"></div>
<div class="t " style="left:1255px;top:552.15px;font-size:14px;color:#115ea3;font-weight:normal;letter-spacing:-0.2px">Corey Descha...</div>
<div class="t " style="left:1371.6px;top:552.15px;font-size:14px;color:#242424;font-weight:normal;">11/25/2025 10:55...</div>
<div class="t " style="left:1660px;top:552.15px;font-size:14px;color:#242424;font-weight:normal;">11/25/2025 10:55 ...</div>
<div class="a" style="left:238px;top:579px;width:1570px;height:1px;background:#f0f0f0;"></div>
<div class="a" style="left:252px;top:593px;width:16px;height:16px;border:1px solid #424242;border-radius:2px"></div>
<div class="t " style="left:294px;top:594.15px;font-size:14px;color:#242424;font-weight:normal;">11/25/2025 10...</div>
<div class="t " style="left:422px;top:594.15px;font-size:14px;color:#115ea3;font-weight:normal;letter-spacing:-0.25px">RE: Cash on hand</div>
<div class="t " style="left:876.3px;top:594.15px;font-size:14px;color:#242424;font-weight:normal;letter-spacing:-0.05px">Email</div>
<div class="t " style="left:1002px;top:594.15px;font-size:14px;color:#242424;font-weight:normal;letter-spacing:-0.25px">Completed</div>
<div class="a" style="left:1098px;top:588px;width:24px;height:24px;border-radius:50%;background:#0a4d8c"></div>
<div class="t " style="left:1101px;top:594.69px;font-size:11px;color:#e6e6e6;font-weight:bold;letter-spacing:-0.9px">VY</div>
<div class="a" style="left:1113px;top:603px;width:10px;height:10px;border-radius:50%;background:#6bb700;border:1px solid #fff"></div>
<div class="t " style="left:1127.6px;top:594.15px;font-size:14px;color:#115ea3;font-weight:normal;letter-spacing:-0.4px">Vivian Young ...</div>
<div class="a" style="left:1226px;top:588px;width:24px;height:24px;border-radius:50%;background:#0a4d8c"></div>
<div class="t " style="left:1229px;top:594.69px;font-size:11px;color:#e6e6e6;font-weight:bold;letter-spacing:-0.9px">VY</div>
<div class="a" style="left:1241px;top:603px;width:10px;height:10px;border-radius:50%;background:#6bb700;border:1px solid #fff"></div>
<div class="t " style="left:1255px;top:594.15px;font-size:14px;color:#115ea3;font-weight:normal;letter-spacing:-0.2px">Vivian Young (...</div>
<div class="t " style="left:1371.6px;top:594.15px;font-size:14px;color:#242424;font-weight:normal;">11/25/2025 9:34 ...</div>
<div class="t " style="left:1660px;top:594.15px;font-size:14px;color:#242424;font-weight:normal;">11/25/2025 9:34 AM</div>
<div class="a" style="left:238px;top:621px;width:1570px;height:1px;background:#f0f0f0;"></div>
<div class="a" style="left:252px;top:635px;width:16px;height:16px;border:1px solid #424242;border-radius:2px"></div>
<div class="t " style="left:294px;top:636.15px;font-size:14px;color:#242424;font-weight:normal;">11/25/2025 8:...</div>
<div class="t " style="left:422px;top:636.15px;font-size:14px;color:#115ea3;font-weight:normal;letter-spacing:-0.25px">RE: FHSA/TFSA available rpom as of J...</div>
<div class="t " style="left:696.6px;top:636.15px;font-size:14px;color:#115ea3;font-weight:normal;letter-spacing:-0.15px">Alana Stanton</div>
<div class="t " style="left:876.3px;top:636.15px;font-size:14px;color:#242424;font-weight:normal;letter-spacing:-0.05px">Email</div>
<div class="t " style="left:1002px;top:636.15px;font-size:14px;color:#242424;font-weight:normal;letter-spacing:-0.25px">Completed</div>
<div class="a" style="left:1098px;top:630px;width:24px;height:24px;border-radius:50%;background:#0a4d8c"></div>
<div class="t " style="left:1101px;top:636.69px;font-size:11px;color:#e6e6e6;font-weight:bold;letter-spacing:-0.9px">VY</div>
<div class="a" style="left:1113px;top:645px;width:10px;height:10px;border-radius:50%;background:#6bb700;border:1px solid #fff"></div>
<div class="t " style="left:1127.6px;top:636.15px;font-size:14px;color:#115ea3;font-weight:normal;letter-spacing:-0.4px">Vivian Young ...</div>
<div class="a" style="left:1226px;top:630px;width:24px;height:24px;border-radius:50%;background:#0a4d8c"></div>
<div class="t " style="left:1229px;top:636.69px;font-size:11px;color:#e6e6e6;font-weight:bold;letter-spacing:-0.9px">VY</div>
<div class="a" style="left:1241px;top:645px;width:10px;height:10px;border-radius:50%;background:#6bb700;border:1px solid #fff"></div>
<div class="t " style="left:1255px;top:636.15px;font-size:14px;color:#115ea3;font-weight:normal;letter-spacing:-0.2px">Vivian Young (...</div>
<div class="t " style="left:1371.6px;top:636.15px;font-size:14px;color:#242424;font-weight:normal;">11/25/2025 8:46 ...</div>
<div class="t " style="left:1660px;top:636.15px;font-size:14px;color:#242424;font-weight:normal;">11/25/2025 8:46 AM</div>
<div class="a" style="left:238px;top:663px;width:1570px;height:1px;background:#f0f0f0;"></div>
<div class="a" style="left:252px;top:677px;width:16px;height:16px;border:1px solid #424242;border-radius:2px"></div>
<div class="t " style="left:294px;top:678.15px;font-size:14px;color:#242424;font-weight:normal;">11/24/2025 1:...</div>
<div class="t " style="left:422px;top:678.15px;font-size:14px;color:#115ea3;font-weight:normal;letter-spacing:-0.25px">RE: final tab payments shareholder dis...</div>
<div class="t " style="left:696.6px;top:678.15px;font-size:14px;color:#115ea3;font-weight:normal;letter-spacing:-0.15px">The Feig...</div>
<div class="t " style="left:876.3px;top:678.15px;font-size:14px;color:#242424;font-weight:normal;letter-spacing:-0.05px">Email</div>
<div class="t " style="left:1002px;top:678.15px;font-size:14px;color:#242424;font-weight:normal;letter-spacing:-0.25px">Completed</div>
<div class="a" style="left:1098px;top:672px;width:24px;height:24px;border-radius:50%;background:#6a3aa8"></div>
<div class="t " style="left:1101px;top:678.69px;font-size:11px;color:#e6e6e6;font-weight:bold;letter-spacing:-0.9px">AB</div>
<div class="a" style="left:1113px;top:687px;width:10px;height:10px;border-radius:50%;background:#fff;border:1.5px solid #8a8a8a;box-shadow:0 0 0 1px #fff"></div>
<div class="t " style="left:1127.6px;top:678.15px;font-size:14px;color:#115ea3;font-weight:normal;letter-spacing:-0.4px">Amanda Barr...</div>
<div class="a" style="left:1226px;top:672px;width:24px;height:24px;border-radius:50%;background:#6a3aa8"></div>
<div class="t " style="left:1229px;top:678.69px;font-size:11px;color:#e6e6e6;font-weight:bold;letter-spacing:-0.9px">AB</div>
<div class="a" style="left:1241px;top:687px;width:10px;height:10px;border-radius:50%;background:#fff;border:1.5px solid #8a8a8a;box-shadow:0 0 0 1px #fff"></div>
<div class="t " style="left:1255px;top:678.15px;font-size:14px;color:#115ea3;font-weight:normal;letter-spacing:-0.2px">Amanda Barry ...</div>
<div class="t " style="left:1371.6px;top:678.15px;font-size:14px;color:#242424;font-weight:normal;">10/6/2025 9:44 AM</div>
<div class="t " style="left:1660px;top:678.15px;font-size:14px;color:#242424;font-weight:normal;">10/6/2025 9:44 AM</div>
<div class="a" style="left:238px;top:705px;width:1570px;height:1px;background:#f0f0f0;"></div>
<div class="a" style="left:252px;top:719px;width:16px;height:16px;border:1px solid #424242;border-radius:2px"></div>
<div class="t " style="left:294px;top:720.15px;font-size:14px;color:#242424;font-weight:normal;">11/24/2025 10...</div>
<div class="t " style="left:422px;top:720.15px;font-size:14px;color:#115ea3;font-weight:normal;letter-spacing:-0.25px">Authorized Contact - CIBC</div>
<div class="t " style="left:696.6px;top:720.15px;font-size:14px;color:#115ea3;font-weight:normal;letter-spacing:-0.15px">Concordia University ...</div>
<div class="t " style="left:876.3px;top:720.15px;font-size:14px;color:#242424;font-weight:normal;letter-spacing:-0.05px">Client Activ...</div>
<div class="t " style="left:1002px;top:720.15px;font-size:14px;color:#242424;font-weight:normal;letter-spacing:-0.25px">Completed</div>
<div class="a" style="left:1098px;top:714px;width:24px;height:24px;border-radius:50%;background:#c4401c"></div>
<div class="t " style="left:1101px;top:720.69px;font-size:11px;color:#e6e6e6;font-weight:bold;letter-spacing:-0.9px">AL</div>
<div class="a" style="left:1113px;top:729px;width:10px;height:10px;border-radius:50%;background:#6bb700;border:1px solid #fff"></div>
<div class="t " style="left:1127.6px;top:720.15px;font-size:14px;color:#115ea3;font-weight:normal;letter-spacing:-0.4px">Adriana Solis ...</div>
<div class="a" style="left:1226px;top:714px;width:24px;height:24px;border-radius:50%;background:#c4401c"></div>
<div class="t " style="left:1229px;top:720.69px;font-size:11px;color:#e6e6e6;font-weight:bold;letter-spacing:-0.9px">AL</div>
<div class="a" style="left:1241px;top:729px;width:10px;height:10px;border-radius:50%;background:#6bb700;border:1px solid #fff"></div>
<div class="t " style="left:1255px;top:720.15px;font-size:14px;color:#115ea3;font-weight:normal;letter-spacing:-0.2px">Adriana Solis L...</div>
<div class="t " style="left:1371.6px;top:720.15px;font-size:14px;color:#242424;font-weight:normal;">11/24/2025 10:47...</div>
<div class="t " style="left:1660px;top:720.15px;font-size:14px;color:#242424;font-weight:normal;">11/24/2025 10:47 ...</div>
<div class="a" style="left:238px;top:747px;width:1570px;height:1px;background:#f0f0f0;"></div>
<div class="a" style="left:252px;top:761px;width:16px;height:16px;border:1px solid #424242;border-radius:2px"></div>
<div class="t " style="left:294px;top:762.15px;font-size:14px;color:#242424;font-weight:normal;">11/24/2025 10...</div>
<div class="t " style="left:422px;top:762.15px;font-size:14px;color:#115ea3;font-weight:normal;letter-spacing:-0.25px">RE: Concordia University Inter-Genera...</div>
<div class="t " style="left:696.6px;top:762.15px;font-size:14px;color:#115ea3;font-weight:normal;letter-spacing:-0.15px">Concordia University ...</div>
<div class="t " style="left:876.3px;top:762.15px;font-size:14px;color:#242424;font-weight:normal;letter-spacing:-0.05px">Email</div>
<div class="t " style="left:1002px;top:762.15px;font-size:14px;color:#242424;font-weight:normal;letter-spacing:-0.25px">Completed</div>
<div class="a" style="left:1098px;top:756px;width:24px;height:24px;border-radius:50%;background:#c4401c"></div>
<div class="t " style="left:1101px;top:762.69px;font-size:11px;color:#e6e6e6;font-weight:bold;letter-spacing:-0.9px">AL</div>
<div class="a" style="left:1113px;top:771px;width:10px;height:10px;border-radius:50%;background:#6bb700;border:1px solid #fff"></div>
<div class="t " style="left:1127.6px;top:762.15px;font-size:14px;color:#115ea3;font-weight:normal;letter-spacing:-0.4px">Adriana Solis ...</div>
<div class="a" style="left:1226px;top:756px;width:24px;height:24px;border-radius:50%;background:#c4401c"></div>
<div class="t " style="left:1229px;top:762.69px;font-size:11px;color:#e6e6e6;font-weight:bold;letter-spacing:-0.9px">AL</div>
<div class="a" style="left:1241px;top:771px;width:10px;height:10px;border-radius:50%;background:#6bb700;border:1px solid #fff"></div>
<div class="t " style="left:1255px;top:762.15px;font-size:14px;color:#115ea3;font-weight:normal;letter-spacing:-0.2px">Adriana Solis L...</div>
<div class="t " style="left:1371.6px;top:762.15px;font-size:14px;color:#242424;font-weight:normal;">11/21/2025 4:59 ...</div>
<div class="t " style="left:1660px;top:762.15px;font-size:14px;color:#242424;font-weight:normal;">11/21/2025 4:59 PM</div>
<div class="a" style="left:238px;top:789px;width:1570px;height:1px;background:#f0f0f0;"></div>
<div class="a" style="left:252px;top:803px;width:16px;height:16px;border:1px solid #424242;border-radius:2px"></div>
<div class="t " style="left:294px;top:804.15px;font-size:14px;color:#242424;font-weight:normal;">11/24/2025 10...</div>
<div class="t " style="left:422px;top:804.15px;font-size:14px;color:#115ea3;font-weight:normal;letter-spacing:-0.25px">Hullmark Investments Ltd - Weekly Ac...</div>
<div class="t " style="left:876.3px;top:804.15px;font-size:14px;color:#242424;font-weight:normal;letter-spacing:-0.05px">Client Activ...</div>
<div class="t " style="left:1002px;top:804.15px;font-size:14px;color:#242424;font-weight:normal;letter-spacing:-0.25px">Completed</div>
<div class="a" style="left:1098px;top:798px;width:24px;height:24px;border-radius:50%;background:#6a3aa8"></div>
<div class="t " style="left:1101px;top:804.69px;font-size:11px;color:#e6e6e6;font-weight:bold;letter-spacing:-0.9px">AB</div>
<div class="a" style="left:1113px;top:813px;width:10px;height:10px;border-radius:50%;background:#fff;border:1.5px solid #8a8a8a;box-shadow:0 0 0 1px #fff"></div>
<div class="t " style="left:1127.6px;top:804.15px;font-size:14px;color:#115ea3;font-weight:normal;letter-spacing:-0.4px">Amanda Barr...</div>
<div class="a" style="left:1226px;top:798px;width:24px;height:24px;border-radius:50%;background:#6a3aa8"></div>
<div class="t " style="left:1229px;top:804.69px;font-size:11px;color:#e6e6e6;font-weight:bold;letter-spacing:-0.9px">AB</div>
<div class="a" style="left:1241px;top:813px;width:10px;height:10px;border-radius:50%;background:#fff;border:1.5px solid #8a8a8a;box-shadow:0 0 0 1px #fff"></div>
<div class="t " style="left:1255px;top:804.15px;font-size:14px;color:#115ea3;font-weight:normal;letter-spacing:-0.2px">Amanda Barry ...</div>
<div class="t " style="left:1371.6px;top:804.15px;font-size:14px;color:#242424;font-weight:normal;">11/24/2025 12:00...</div>
<div class="t " style="left:1519.4px;top:804.15px;font-size:14px;color:#242424;font-weight:normal;">11/24/2025 12:0...</div>
<div class="t " style="left:1660px;top:804.15px;font-size:14px;color:#242424;font-weight:normal;">11/24/2025 12:00 ...</div>
<div class="a" style="left:238px;top:831px;width:1570px;height:1px;background:#f0f0f0;"></div>
<div class="a" style="left:252px;top:845px;width:16px;height:16px;border:1px solid #424242;border-radius:2px"></div>
<div class="t " style="left:294px;top:846.15px;font-size:14px;color:#242424;font-weight:normal;">11/20/2025 4:...</div>
<div class="t " style="left:422px;top:846.15px;font-size:14px;color:#115ea3;font-weight:normal;letter-spacing:-0.25px">RE: Support for Your GFI Investments</div>
<div class="t " style="left:696.6px;top:846.15px;font-size:14px;color:#115ea3;font-weight:normal;letter-spacing:-0.15px">Lindsay Goodman</div>
<div class="t " style="left:876.3px;top:846.15px;font-size:14px;color:#242424;font-weight:normal;letter-spacing:-0.05px">Email</div>
<div class="t " style="left:1002px;top:846.15px;font-size:14px;color:#242424;font-weight:normal;letter-spacing:-0.25px">Completed</div>
<div class="a" style="left:1098px;top:840px;width:24px;height:24px;border-radius:50%;background:#0a4d8c"></div>
<div class="t " style="left:1101px;top:846.69px;font-size:11px;color:#e6e6e6;font-weight:bold;letter-spacing:-0.9px">VY</div>
<div class="a" style="left:1113px;top:855px;width:10px;height:10px;border-radius:50%;background:#6bb700;border:1px solid #fff"></div>
<div class="t " style="left:1127.6px;top:846.15px;font-size:14px;color:#115ea3;font-weight:normal;letter-spacing:-0.4px">Vivian Young ...</div>
<div class="a" style="left:1226px;top:840px;width:24px;height:24px;border-radius:50%;background:#0a4d8c"></div>
<div class="t " style="left:1229px;top:846.69px;font-size:11px;color:#e6e6e6;font-weight:bold;letter-spacing:-0.9px">VY</div>
<div class="a" style="left:1241px;top:855px;width:10px;height:10px;border-radius:50%;background:#6bb700;border:1px solid #fff"></div>
<div class="t " style="left:1255px;top:846.15px;font-size:14px;color:#115ea3;font-weight:normal;letter-spacing:-0.2px">Vivian Young (...</div>
<div class="t " style="left:1371.6px;top:846.15px;font-size:14px;color:#242424;font-weight:normal;">11/20/2025 8:31 ...</div>
<div class="t " style="left:1660px;top:846.15px;font-size:14px;color:#242424;font-weight:normal;">11/20/2025 8:31 AM</div>
<div class="a" style="left:238px;top:873px;width:1570px;height:1px;background:#f0f0f0;"></div>
<div class="a" style="left:252px;top:887px;width:16px;height:16px;border:1px solid #424242;border-radius:2px"></div>
<div class="t " style="left:294px;top:888.15px;font-size:14px;color:#242424;font-weight:normal;">11/20/2025 4:...</div>
<div class="t " style="left:422px;top:888.15px;font-size:14px;color:#115ea3;font-weight:normal;letter-spacing:-0.25px">EFT Out</div>
<div class="t " style="left:696.6px;top:888.15px;font-size:14px;color:#115ea3;font-weight:normal;letter-spacing:-0.15px">Karen Hyman</div>
<div class="t " style="left:876.3px;top:888.15px;font-size:14px;color:#242424;font-weight:normal;letter-spacing:-0.05px">Client Activ...</div>
<div class="t " style="left:1002px;top:888.15px;font-size:14px;color:#242424;font-weight:normal;letter-spacing:-0.25px">Completed</div>
<div class="a" style="left:1098px;top:882px;width:24px;height:24px;border-radius:50%;background:#1a7fd0"></div>
<div class="t " style="left:1101px;top:888.69px;font-size:11px;color:#e6e6e6;font-weight:bold;letter-spacing:-0.9px">AT</div>
<div class="a" style="left:1113px;top:897px;width:10px;height:10px;border-radius:50%;background:#6bb700;border:1px solid #fff"></div>
<div class="t " style="left:1127.6px;top:888.15px;font-size:14px;color:#115ea3;font-weight:normal;letter-spacing:-0.4px">Allan Toda (A...</div>
<div class="a" style="left:1226px;top:882px;width:24px;height:24px;border-radius:50%;background:#1a7fd0"></div>
<div class="t " style="left:1229px;top:888.69px;font-size:11px;color:#e6e6e6;font-weight:bold;letter-spacing:-0.9px">AT</div>
<div class="a" style="left:1241px;top:897px;width:10px;height:10px;border-radius:50%;background:#6bb700;border:1px solid #fff"></div>
<div class="t " style="left:1255px;top:888.15px;font-size:14px;color:#115ea3;font-weight:normal;letter-spacing:-0.2px">Allan Toda (Av...</div>
<div class="t " style="left:1371.6px;top:888.15px;font-size:14px;color:#242424;font-weight:normal;">11/20/2025 4:20 ...</div>
<div class="t " style="left:1660px;top:888.15px;font-size:14px;color:#242424;font-weight:normal;">11/20/2025 4:20 PM</div>
<div class="a" style="left:238px;top:915px;width:1570px;height:1px;background:#f0f0f0;"></div>
<div class="a" style="left:252px;top:929px;width:16px;height:16px;border:1px solid #424242;border-radius:2px"></div>
<div class="t " style="left:294px;top:930.15px;font-size:14px;color:#242424;font-weight:normal;">11/20/2025 3:...</div>
<div class="t " style="left:422px;top:930.15px;font-size:14px;color:#115ea3;font-weight:normal;letter-spacing:-0.25px">Portfolio and KYC Review</div>
<div class="t " style="left:696.6px;top:930.15px;font-size:14px;color:#115ea3;font-weight:normal;letter-spacing:-0.15px">Lauren Cohen</div>
<div class="t " style="left:876.3px;top:930.15px;font-size:14px;color:#242424;font-weight:normal;letter-spacing:-0.05px">Client Activ...</div>
<div class="t " style="left:1002px;top:930.15px;font-size:14px;color:#242424;font-weight:normal;letter-spacing:-0.25px">Completed</div>
<div class="a" style="left:1098px;top:924px;width:24px;height:24px;border-radius:50%;background:#0a4d8c"></div>
<div class="t " style="left:1101px;top:930.69px;font-size:11px;color:#e6e6e6;font-weight:bold;letter-spacing:-0.9px">VY</div>
<div class="a" style="left:1113px;top:939px;width:10px;height:10px;border-radius:50%;background:#6bb700;border:1px solid #fff"></div>
<div class="t " style="left:1127.6px;top:930.15px;font-size:14px;color:#115ea3;font-weight:normal;letter-spacing:-0.4px">Vivian Young ...</div>
<div class="a" style="left:1226px;top:924px;width:24px;height:24px;border-radius:50%;background:#0a4d8c"></div>
<div class="t " style="left:1229px;top:930.69px;font-size:11px;color:#e6e6e6;font-weight:bold;letter-spacing:-0.9px">VY</div>
<div class="a" style="left:1241px;top:939px;width:10px;height:10px;border-radius:50%;background:#6bb700;border:1px solid #fff"></div>
<div class="t " style="left:1255px;top:930.15px;font-size:14px;color:#115ea3;font-weight:normal;letter-spacing:-0.2px">Vivian Young (...</div>
<div class="t " style="left:1371.6px;top:930.15px;font-size:14px;color:#242424;font-weight:normal;">11/20/2025 3:53 ...</div>
<div class="t " style="left:1519.4px;top:930.15px;font-size:14px;color:#242424;font-weight:normal;">11/20/2025 8:00...</div>
<div class="t " style="left:1660px;top:930.15px;font-size:14px;color:#242424;font-weight:normal;">11/20/2025 3:53 PM</div>
<div class="a" style="left:238px;top:957px;width:1570px;height:1px;background:#f0f0f0;"></div>
<div class="a" style="left:238px;top:958px;width:1570px;height:11px;overflow:hidden"><div class="a" style="left:860px;top:9px;width:24px;height:24px;border-radius:50%;background:#c4401c"></div><div class="a" style="left:988px;top:9px;width:24px;height:24px;border-radius:50%;background:#c4401c"></div></div>
<div class="a" style="left:236px;top:969px;width:1588px;height:1px;background:#d6d6d6;"></div>
<div class="a" style="left:1812px;top:376px;width:6px;height:155px;background:#c4c4c4;border-radius:3px"></div>
<div class="t " style="left:237px;top:986.15px;font-size:14px;color:#242424;font-weight:normal;letter-spacing:-0.35px">Rows: 5000+</div>
<div class="t " style="left:336px;top:986.15px;font-size:14px;color:#242424;font-weight:normal;letter-spacing:-0.4px">Selected: 1</div>
<div class="a" style="left:0px;top:86px;width:1920px;height:946px;background:rgba(0,0,0,.5);"></div>
<div class="a" style="left:750px;top:420px;width:420px;height:279px;background:#fff;border-radius:8px;box-shadow:0 0 2px rgba(0,0,0,.12),0 8px 16px rgba(0,0,0,.14)"></div>
<div class="t " style="left:775.6px;top:447.22px;font-size:19px;color:#242424;font-weight:bold;letter-spacing:-0.15px">Assign to Team or User</div>
<svg style="left:1127px;top:446px;" width="12" height="12" viewBox="0 0 12 12"><path d="M0.5 0.5 L11.5 11.5 M11.5 0.5 L0.5 11.5" stroke="#242424" stroke-width="1.1"/></svg>
<div class="t " style="left:775.6px;top:485.15px;font-size:14px;color:#242424;font-weight:normal;">You have selected 1 item. To whom would you like to assign</div>
<div class="t " style="left:775.6px;top:505.15px;font-size:14px;color:#242424;font-weight:normal;">it?</div>
<div class="t " style="left:775.6px;top:537.15px;font-size:14px;color:#242424;font-weight:normal;letter-spacing:-0.3px">Assign To</div>
<div class="a" style="left:959.5px;top:532px;width:183px;height:32px;background:#f5f5f5;border-radius:4px"></div>
<div class="t " style="left:972.3px;top:541.15px;font-size:14px;color:#242424;font-weight:normal;letter-spacing:-0.18px">User or team</div>
<svg style="left:1117px;top:545px;" width="11" height="7" viewBox="0 0 11 7"><path d="M0.5 0.5 L5.5 6 L10.5 0.5" stroke="#424242" stroke-width="1.1" fill="none"/></svg>
<div class="t " style="left:775.6px;top:581.15px;font-size:14px;color:#242424;font-weight:normal;letter-spacing:-0.18px">User or team</div>
<div class="a" style="left:959.5px;top:576px;width:183px;height:31px;background:#f5f5f5;border-radius:4px"></div>
<div class="t " style="left:972.3px;top:586.15px;font-size:14px;color:#8a8a8a;font-weight:normal;">---</div>
<svg style="left:1120px;top:585px;" width="14" height="14" viewBox="0 0 14 14"><circle cx="9" cy="5" r="4.3" stroke="#424242" stroke-width="1.1" fill="none"/><path d="M6 8 L0.8 13.2" stroke="#424242" stroke-width="1.2"/></svg>
<div class="a" style="left:944px;top:640px;width:96px;height:33px;background:#fbfbfb;border-radius:4px"></div>
<div class="t " style="left:973.3px;top:651.15px;font-size:14px;color:#e0e0e0;font-weight:bold;letter-spacing:-0.6px">Assign</div>
<div class="a" style="left:1049px;top:642px;width:96px;height:32px;border:1px solid #d1d1d1;border-radius:4px;background:#fff"></div>
<div class="t " style="left:1076px;top:651.15px;font-size:14px;color:#242424;font-weight:bold;letter-spacing:-0.4px">Cancel</div>
<svg style="left:1120px;top:974px;" width="9" height="13" viewBox="0 0 9 13"><path d="M0.5 0.5 V11 L3.2 8.6 L5.2 12.4 L6.8 11.7 L4.9 8 H8.2 Z" fill="#fff" stroke="#000" stroke-width="0.9" stroke-linejoin="round"/></svg>
</body></html>
